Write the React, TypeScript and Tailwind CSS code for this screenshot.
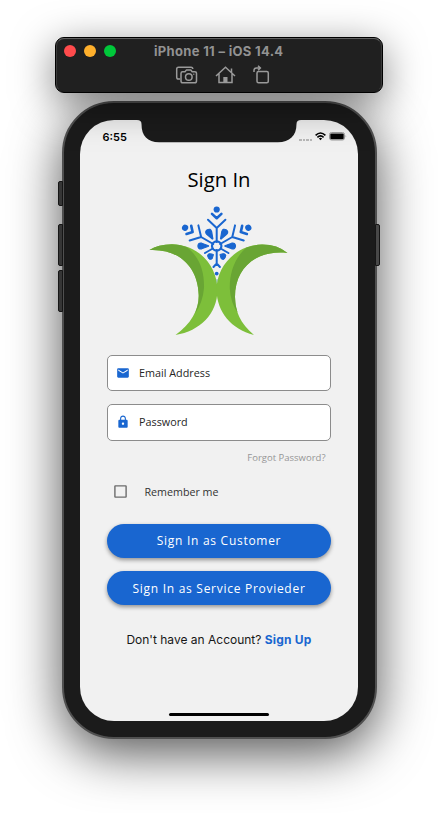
import React from "react";
import { MdEmail, MdLock } from "react-icons/md";

const blue = "#1966d0";

function Toolbar() {
  return (
    <header className="relative z-10 ml-[55px] flex h-14 w-[328px] flex-col rounded-[9px] border border-black bg-[#202020] shadow-[0_10px_40px_rgba(0,0,0,0.5)]">
      <div className="absolute inset-0 rounded-[8px] border border-[#3a3a3a] border-t-[#606060] border-b-transparent" />
      <div className="flex h-[26px] items-center pl-2">
        <div className="flex gap-2">
          <span className="size-3 rounded-full bg-[#ff4b4c]" />
          <span className="size-3 rounded-full bg-[#ffb02c]" />
          <span className="size-3 rounded-full bg-[#00c83a]" />
        </div>
        <h1 className="ml-[38px] whitespace-nowrap font-['Inter',sans-serif] text-[13px] leading-4 font-bold tracking-[0.320px] text-[#929292]">iPhone 11 – iOS 14.4</h1>
      </div>
      <div className="mt-px ml-[119px] flex items-center text-[#9a9a9a]">
        <svg width="24" height="20" viewBox="0 0 24 20" fill="none" stroke="currentColor" strokeWidth="1.5" strokeLinejoin="round">
          <path d="M5 14H3.500Q1.700 14 1.700 12.200V4Q1.700 2.200 3.500 2.200H16Q17.800 2.200 17.800 4" />
          <path d="M7.500 6.800H10L11.300 5.100H15.800L17.200 6.800H19.700Q21.500 6.800 21.500 8.500V16Q21.500 17.800 19.700 17.800H7.700Q6 17.800 6 16V8.500Q6 6.800 7.500 6.800Z" />
          <circle cx="13.800" cy="12" r="3.300" />
          <path d="M18.300 9.200h1" />
        </svg>
        <svg className="ml-4" width="22" height="20" viewBox="0 0 22 20" fill="none" stroke="currentColor" strokeWidth="1.500">
          <path d="M1 11L10.500 2.200L20 11M4 8.500V17.600H17V8.500M16.500 7.500V3.500" />
          <path d="M8.300 17.500V12H12.500V17.500Z" fill="currentColor" stroke="none" />
        </svg>
        <svg className="ml-4" width="18" height="20" viewBox="0 0 18 20" fill="none" stroke="currentColor" strokeWidth="1.500" strokeLinejoin="round">
          <rect x="4" y="6.500" width="11.300" height="11.200" rx="1.500" />
          <path d="M1 7V5.500Q1 3 3.500 3H7M5 .8L7.500 3L5 5.200" />
        </svg>
      </div>
    </header>
  );
}

function StatusBar() {
  return (
    <div className="relative flex h-[34px] items-center justify-between pr-[11px] pl-[22.500px]">
      <svg className="absolute -top-px left-[57px]" width="164" height="24" viewBox="0 0 164 24">
        <path d="M0 0V1Q4.500 1 4.500 5C4.500 17 10.500 23.200 22 23.200H141C152.500 23.200 159.500 17 159.500 5Q159.500 1 164 1V0Z" fill="#1b1b1b" />
      </svg>
      <span className="font-['Inter',sans-serif] text-[11px] leading-4 font-semibold">6:55</span>
      <div className="-mt-px flex items-center gap-[3px]">
        <div className="mt-[6px] flex gap-px">
          <i className="h-[2px] w-[2.500px] bg-[#b8b8b8]" />
          <i className="h-[2px] w-[2.500px] bg-[#b8b8b8]" />
          <i className="h-[2px] w-[2.500px] bg-[#b8b8b8]" />
          <i className="h-[2px] w-[2.500px] bg-[#b8b8b8]" />
        </div>
        <svg width="11" height="9" viewBox="0 0 11 9" fill="none" stroke="#000" strokeWidth="1.600">
          <path d="M.6 3.300Q5.500 -1.300 10.400 3.300M2.400 5.300Q5.500 2.500 8.600 5.300" />
          <path d="M3.900 6.400Q5.500 5 7.100 6.400L5.500 8.200Z" fill="#000" stroke="none" />
        </svg>
        <svg width="18" height="9" viewBox="0 0 18 9">
          <rect x=".5" y=".5" width="15" height="7.500" rx="2" fill="none" stroke="#9c9c9c" />
          <rect x="1.300" y="1.400" width="13.400" height="5.800" rx="1" />
          <path d="M16.600 3Q18 4.200 16.600 5.500Z" fill="#999" />
        </svg>
      </div>
    </div>
  );
}

function Logo() {
  return (
    <svg className="ml-[68px] block" width="142" height="133" viewBox="148 204 142 133">
      <g fill="none" stroke={blue} strokeWidth="2" strokeLinecap="round" strokeLinejoin="round">
        {[-60, 0, 60].map((angle) => (
          <g key={angle} transform={`rotate(${angle} 216.700 246)`}>
            <path d="M216.700 242V228M208 219.800L216.700 228L225.400 219.800" />
            <path d="M212 213.900L216.700 218.200L221.400 213.900" strokeWidth="2.600" />
            <circle cx="216.700" cy="209.500" r="3.100" fill={blue} stroke="none" />
          </g>
        ))}
        <circle cx="216.700" cy="246" r="4.700" strokeWidth="2.200" />
        {[-90, -30, 30, 90].map((angle) => (
          <path key={angle} transform={`rotate(${angle} 216.700 246)`} d="M216.400 237.800L213.900 231Q213.100 227.500 216.700 227.200Q220.300 227.500 219.500 231L217 237.800Z" fill={blue} strokeWidth="1.200" />
        ))}
        <path d="M216.700 250V265M213.500 267L216.700 263.500L219.900 267M212.800 248.500L205 253M220.600 248.500L228.400 253" />
        <path d="M207.800 256Q207 253.500 210.500 253.700L213.500 254.500L212.200 258.800Q208.500 261 207.800 256ZM225.600 256Q226.400 253.500 222.900 253.700L219.900 254.500L221.200 258.800Q224.900 261 225.600 256Z" fill={blue} strokeWidth="1" />
        <circle cx="216.700" cy="273.600" r="1.900" fill={blue} stroke="none" />
        <path d="M214.600 279.200H218.800L216.700 284Z" fill="#a9cfe6" stroke="none" />
      </g>
      <path d="M149.500 250Q158 244.300 172 244.200C199 244.500 217.400 266 217.400 290C217.400 314 200 331 175.500 335C191 324 199 310 198.700 295C198 266 178 248.500 149.500 250Z" fill="#7dbf3a" />
      <path d="M149.500 250Q158 244.300 172 244.200Q180 244.300 186.500 247C200 257 204.500 272 204 288Q203 302 194.700 314Q199 304 198.700 295C198 266 178 248.500 149.500 250Z" fill="#69a534" />
      <path d="M287.500 253Q277 244.500 262 244.600C236 245 216.500 266 216.500 290C217 312 231 329 254 335C240 323 235 311 235 297C235 268 256 249.500 287.500 253Z" fill="#7dbf3a" />
      <path d="M287.500 253Q277 244.500 262 244.600Q253 245 246.500 247.500C235 257 229.300 273 229.800 289Q230.500 302 237.700 313Q235 305 235 297C235 268 256 249.500 287.500 253Z" fill="#69a534" />
    </svg>
  );
}

function Field({ icon, label }: { icon: React.ReactNode; label: string }) {
  return (
    <div className="flex h-[36.500px] items-center rounded-[5px] border border-[#8c8c8c] bg-white pl-2 text-[#1966d0]">
      {icon}
      <span className="ml-[9px] text-[10.800px] leading-4 text-[#252525]">{label}</span>
    </div>
  );
}

function ActionButton({ children }: { children: React.ReactNode }) {
  return (
    <button className="h-[34px] w-full rounded-full bg-[#1966d0] pt-px text-[12px] leading-4 tracking-[0.720px] text-white shadow-[0_2px_4px_rgba(0,0,0,0.4)]">
      {children}
    </button>
  );
}

function Phone() {
  return (
    <main className="relative mt-2 ml-[62px] h-[638px] w-[315px] rounded-[52px] border-2 border-[#505050] bg-[#1b1b1b] px-4 pt-[17px] shadow-[0_14px_52px_rgba(0,0,0,0.68)]">
      <i className="absolute top-[78px] -left-[6px] h-[25px] w-[5px] rounded-l-[2px] border border-[#161616] bg-[#363636]" />
      <i className="absolute top-[121px] -left-[6px] h-[42px] w-[5px] rounded-l-[2px] border border-[#161616] bg-[#363636]" />
      <i className="absolute top-[167px] -left-[6px] h-[42px] w-[5px] rounded-l-[2px] border border-[#161616] bg-[#363636]" />
      <i className="absolute top-[121px] -right-[5px] h-[42px] w-[5px] rounded-r-[2px] border border-[#161616] bg-[#484848]" />
      <section className="flex h-[601px] w-[278px] flex-col rounded-[34px] bg-[#f1f1f1] font-['Open_Sans',sans-serif] text-black">
        <StatusBar />
        <h2 className="mt-[10px] text-center text-[20.300px] leading-[30px]">Sign In</h2>
        <div className="mt-[10px]"><Logo /></div>
        <form className="mt-[17.500px] ml-[27px] flex w-[224px] flex-col">
          <Field icon={<MdEmail size={14} />} label="Email Address" />
          <div className="mt-[13px]"><Field icon={<MdLock size={14} />} label="Password" /></div>
          <a className="mt-[9px] pr-[5.500px] text-right text-[9.500px] leading-4 text-[#969696]">Forgot Password?</a>
          <label className="mt-[18px] flex items-center pl-[7px] text-[10.700px] leading-4 text-[#333]">
            <svg className="mr-[17.500px]" width="13" height="13" viewBox="0 0 13 13" fill="none" stroke="#6c6c6c" strokeWidth="1.400">
              <rect x=".9" y=".9" width="11.200" height="11.200" rx=".4" />
            </svg>
            Remember me
          </label>
          <div className="mt-6 flex flex-col gap-[13.500px]">
            <ActionButton>Sign In as Customer</ActionButton>
            <ActionButton>Sign In as Service Provieder</ActionButton>
          </div>
        </form>
        <p className="mt-[27px] whitespace-nowrap text-center font-['Inter',sans-serif] text-[12px] leading-4 text-[#171717]">
          Don't have an Account? <b className="font-bold tracking-[0.200px] text-[#1966d0]">Sign Up</b>
        </p>
        <div className="mx-auto mt-auto mb-[5px] h-[3px] w-[100px] rounded-full bg-black" />
      </section>
    </main>
  );
}

export default function App() {
  return (
    <div className="h-[813px] w-[438px] overflow-hidden bg-white pt-[37px]">
      <Toolbar />
      <Phone />
    </div>
  );
}
